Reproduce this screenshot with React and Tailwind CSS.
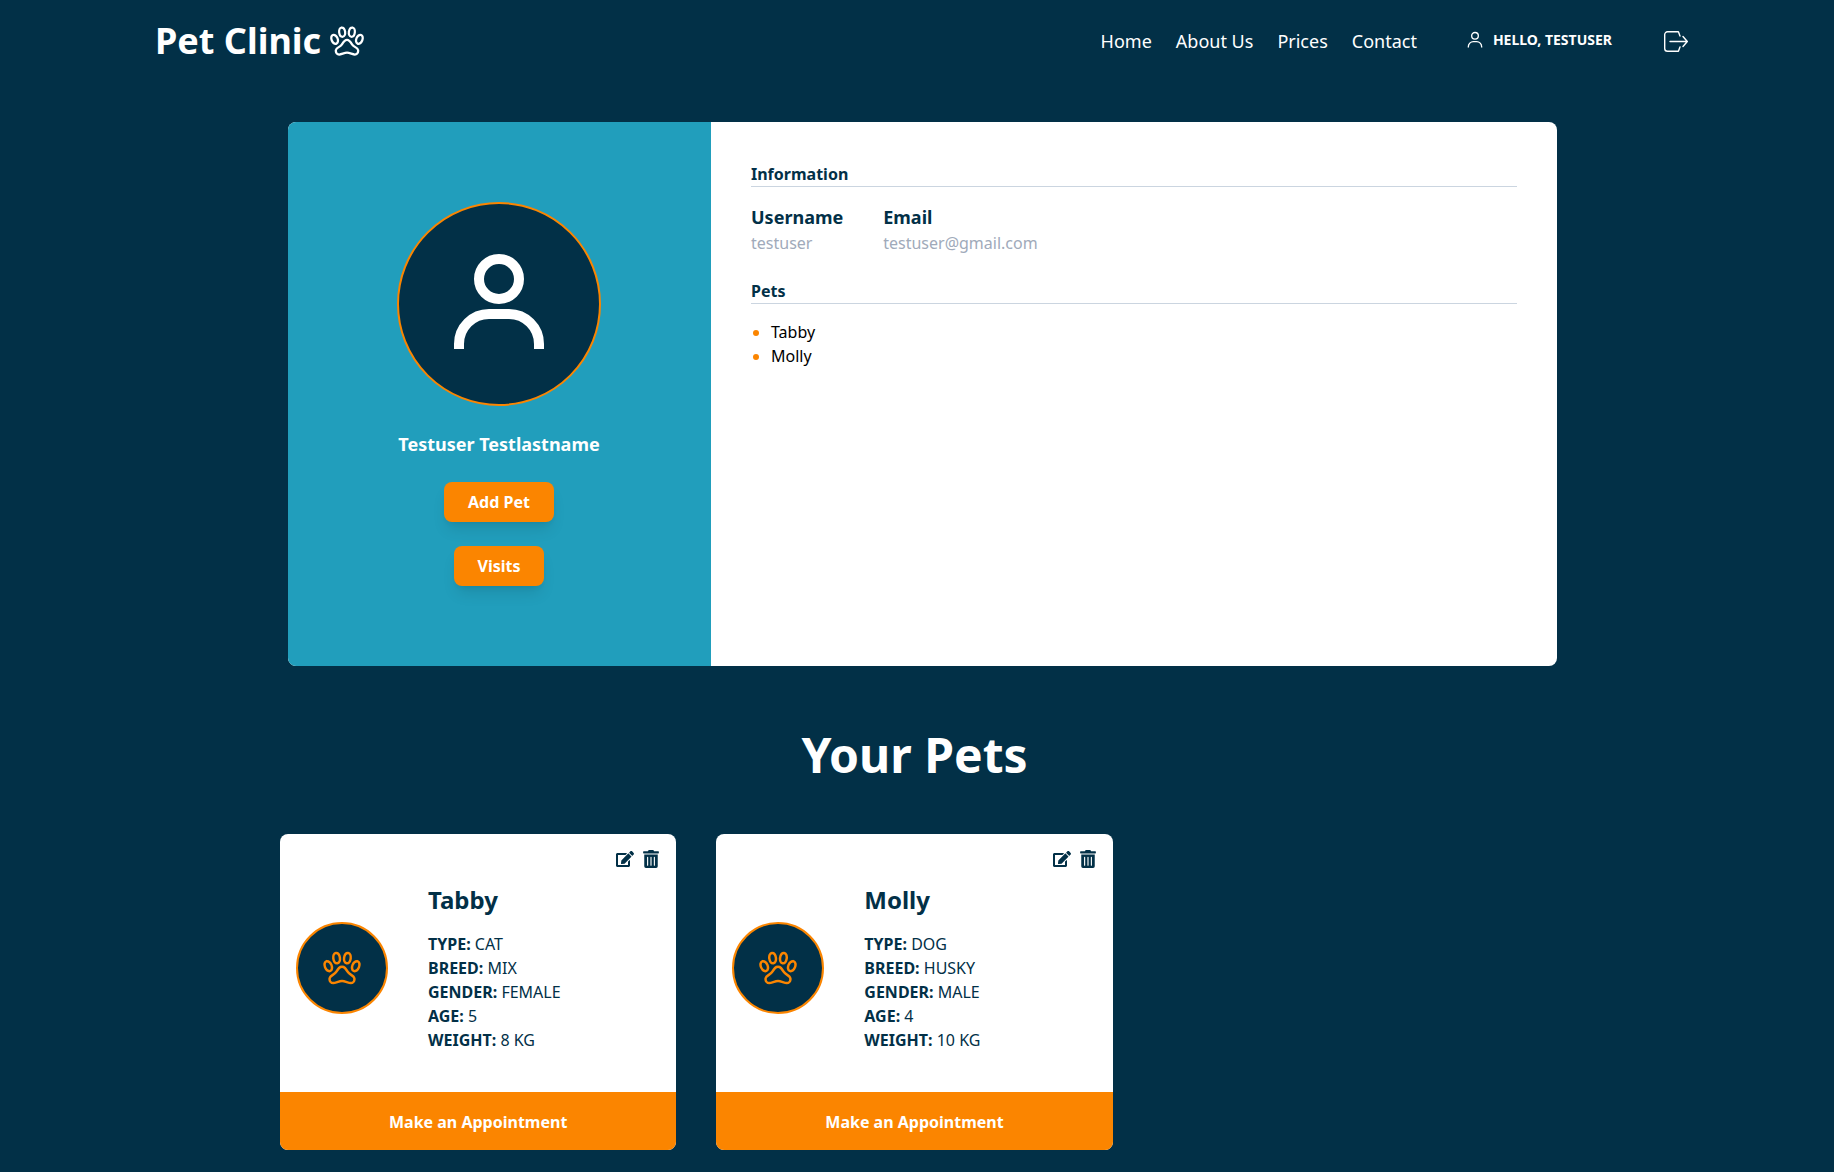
import { FaEdit, FaTrashAlt } from 'react-icons/fa'
import { IoPawOutline } from 'react-icons/io5'

const NAV_LINKS = ['Home', 'About Us', 'Prices', 'Contact']

const PETS = [
  { name: 'Tabby', type: 'CAT', breed: 'MIX', gender: 'FEMALE', age: '5', weight: '8 KG' },
  { name: 'Molly', type: 'DOG', breed: 'HUSKY', gender: 'MALE', age: '4', weight: '10 KG' },
]

function UserIcon({ className, strokeWidth = 2 }) {
  return (
    <svg viewBox="0 0 24 24" fill="none" stroke="currentColor" strokeWidth={strokeWidth} className={className}>
      <circle cx="12" cy="7" r="4" />
      <path d="M4 21v-1a6 6 0 0 1 6-6h4a6 6 0 0 1 6 6v1" />
    </svg>
  )
}

function LogoutIcon() {
  return (
    <svg viewBox="0 0 24 21" fill="none" stroke="currentColor" strokeWidth="1.4" strokeLinecap="round" strokeLinejoin="round" className="w-6 h-[21px]">
      <path d="M16 5L14.4 .8H3.5A2.8 2.8 0 0 0 .7 3.6V17.4A2.8 2.8 0 0 0 3.5 20.2H14.4L16 16" />
      <path d="M6 10.5H23.2M19 5.5L23.3 10.5L19 15.5" />
    </svg>
  )
}

function Header() {
  return (
    <header className="flex items-center justify-between h-[82px] pl-[155px] pr-[146px]">
      <div className="flex items-center gap-2">
        <span className="text-[36px] leading-[48px] font-bold">Pet Clinic</span>
        <IoPawOutline className="w-9 h-9" />
      </div>
      <nav className="flex items-center">
        <ul className="flex gap-6 text-[18px] leading-7">
          {NAV_LINKS.map((l) => (
            <li key={l}>{l}</li>
          ))}
        </ul>
        <div className="flex items-center gap-2 ml-[48px] mb-[2px]">
          <UserIcon className="w-5 h-5" strokeWidth={1.6} />
          <span className="text-[14px] leading-5 font-bold uppercase">Hello, testuser</span>
        </div>
        <div className="ml-[52px]">
          <LogoutIcon />
        </div>
      </nav>
    </header>
  )
}

function ProfileCard() {
  return (
    <section className="flex w-[1269px] h-[544px] ml-2 rounded-lg overflow-hidden bg-white">
      <div className="w-[423px] shrink-0 bg-[#219ebc] flex flex-col items-center pt-20 pr-px">
        <div className="w-[204px] h-[204px] rounded-full bg-[#023047] border-2 border-[#fb8500] flex items-center justify-center">
          <UserIcon className="w-[120px] h-[120px]" />
        </div>
        <h2 className="mt-6 text-[18px] leading-7 font-bold">Testuser Testlastname</h2>
        <button className="mt-6 px-6 py-2 rounded-lg bg-[#fb8500] font-bold shadow-lg">Add Pet</button>
        <button className="mt-6 px-6 py-2 rounded-lg bg-[#fb8500] font-bold shadow-lg">Visits</button>
      </div>
      <div className="flex-1 px-10 pt-10 text-[#023047]">
        <h3 className="font-bold leading-6 border-b border-[#cbd5e0]">Information</h3>
        <div className="flex gap-10 mt-4">
          <div>
            <p className="text-[18px] leading-7 font-bold">Username</p>
            <p className="leading-6 text-[#a0aaba]">testuser</p>
          </div>
          <div>
            <p className="text-[18px] leading-7 font-bold">Email</p>
            <p className="leading-6 text-[#a0aaba]">testuser@gmail.com</p>
          </div>
        </div>
        <h3 className="mt-6 font-bold leading-6 border-b border-[#cbd5e0]">Pets</h3>
        <ul className="mt-4 pl-5 list-disc text-black leading-6 marker:text-[#fb8500]">
          <li>Tabby</li>
          <li>Molly</li>
        </ul>
      </div>
    </section>
  )
}

function PetCard({ pet }) {
  const rows = [
    ['TYPE', pet.type],
    ['BREED', pet.breed],
    ['GENDER', pet.gender],
    ['AGE', pet.age],
    ['WEIGHT', pet.weight],
  ]
  return (
    <article className="bg-white rounded-lg overflow-hidden text-[#023047]">
      <div className="flex justify-end gap-[9px] pt-4 pr-[17px] h-[34px]">
        <FaEdit className="w-[18px] h-[16px] mt-px" />
        <FaTrashAlt className="w-[16px] h-[18px]" />
      </div>
      <div className="flex items-center gap-10 pl-4 pt-4 pb-10">
        <div className="w-[92px] h-[92px] rounded-full bg-[#023047] border-2 border-[#fb8500] flex items-center justify-center text-[#fb8500]">
          <IoPawOutline className="w-10 h-10" />
        </div>
        <div>
          <h3 className="text-2xl leading-8 font-bold">{pet.name}</h3>
          <ul className="mt-4 leading-6">
            {rows.map(([label, value]) => (
              <li key={label}>
                <span className="font-bold">{label}:</span> {value}
              </li>
            ))}
          </ul>
        </div>
      </div>
      <button className="block w-full h-[58px] pt-px bg-[#fb8500] text-white font-bold">Make an Appointment</button>
    </article>
  )
}

export default function App() {
  return (
    <div className="min-h-screen bg-[#023047] text-white font-['Noto_Sans',sans-serif]">
      <Header />
      <main className="w-[1269px] ml-[280px] pt-10">
        <ProfileCard />
        <h1 className="mt-[57px] text-center text-5xl leading-[64px] font-bold">Your Pets</h1>
        <div className="grid grid-cols-3 gap-10 mt-[47px]">
          {PETS.map((p) => (
            <PetCard key={p.name} pet={p} />
          ))}
        </div>
      </main>
    </div>
  )
}
